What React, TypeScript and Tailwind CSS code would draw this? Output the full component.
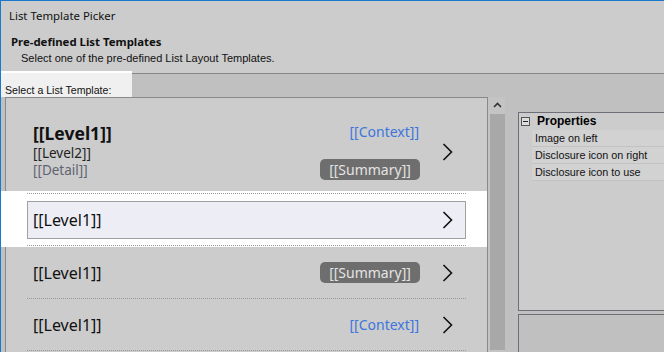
import React from 'react';

const Chevron = () => (
  <svg width="11" height="18" viewBox="0 0 11 18" className="shrink-0">
    <polyline points="1.5,1 9.5,9 1.5,17" fill="none" stroke="#111" strokeWidth="1.6" />
  </svg>
);

const Summary = () => (
  <span className="inline-flex h-[21px] w-[100px] items-center justify-center rounded-[5px] bg-[#6e6e6e] text-[14px] text-[#e4e4e4]">
    [[Summary]]
  </span>
);

const Context = () => <span className="text-[14px] text-[#3d76dc]">[[Context]]</span>;

const rows = ['Image on left', 'Disclosure icon on right', 'Disclosure icon to use'];

const arial = { fontFamily: '"Liberation Sans", Arial, sans-serif' };

export default function App() {
  return (
    <div
      className="relative h-[352px] w-[664px] overflow-hidden border-l border-t border-[#1979ca] bg-[#c0c0c0] text-[#111]"
      style={{ fontFamily: '"Noto Sans", "Open Sans", sans-serif' }}
    >
      <div className="h-[70px] bg-[#cccccc] pl-[8px] pt-[7px] text-[11.4px] leading-[16px]">
        <div>List Template Picker</div>
        <div className="mt-[10px] pl-[2px] font-bold">Pre-defined List Templates</div>
        <div className="pl-[12px] text-[11px]" style={arial}>
          Select one of the pre-defined List Layout Templates.
        </div>
      </div>

      <div className="flex h-[26px]">
        <div
          className="w-[131px] border-t-2 border-white bg-[#f0f0f0] pl-[4px] pt-[10px] text-[10.6px] leading-[14px]"
          style={arial}
        >
          Select a List Template:
        </div>
        <div className="flex-1">
          <div className="h-[2px] bg-[#cccccc]" />
          <div className="h-px bg-[#888]" />
        </div>
      </div>

      <div className="flex">
        <div className="ml-[4px] h-[256px] w-[483px] border-l border-r border-t border-[#8a8a8a] bg-[#cccccc]">
          {/* item 1 */}
          <div className="mx-[21px] flex h-[93px] items-center pl-[6px] pr-[13px] pt-[12px]">
            <div className="flex flex-1 flex-col">
              <span className="text-[17.5px] font-bold leading-[22px] text-[#111]">[[Level1]]</span>
              <span className="text-[13.5px] leading-[18px] text-[#222]">[[Level2]]</span>
              <span className="text-[13.5px] leading-[17px] text-[#5f6472]">[[Detail]]</span>
            </div>
            <div className="flex h-[58px] flex-col items-end justify-between">
              <span className="pr-[1px] leading-[18px]">
                <Context />
              </span>
              <Summary />
            </div>
            <div className="ml-[22px] pt-[2px]">
              <Chevron />
            </div>
          </div>

          {/* item 2, selected */}
          <div className="-ml-[5px] flex h-[56px] flex-col bg-white pl-[5px]">
            <div className="mx-[21px] mt-[2px] border-t border-dotted border-[#999]" />
            <div className="mx-[21px] mt-[7px] flex h-[38px] items-center border border-[#a0a0a0] bg-[#ededf5] pl-[5px] pr-[12px]">
              <span className="flex-1 text-[16px] text-[#111]">[[Level1]]</span>
              <Chevron />
            </div>
            <div className="mx-[21px] mt-[6px] border-t border-dotted border-[#999]" />
          </div>

          {/* item 3 */}
          <div className="mx-[21px] flex h-[52px] items-center border-b border-dotted border-[#999] pl-[6px] pr-[13px]">
            <span className="flex-1 text-[16px] text-[#111]">[[Level1]]</span>
            <Summary />
            <div className="ml-[22px]">
              <Chevron />
            </div>
          </div>

          {/* item 4 */}
          <div className="mx-[21px] flex h-[52px] items-center border-b border-dotted border-[#999] pl-[6px] pr-[13px]">
            <span className="flex-1 text-[16px] text-[#111]">[[Level1]]</span>
            <Context />
            <div className="ml-[23px]">
              <Chevron />
            </div>
          </div>
        </div>

        <div className="flex w-[17px] flex-col items-end bg-[#c4c4c4]">
          <svg width="15" height="17" viewBox="0 0 15 17">
            <polyline points="4,10 7.5,6.5 11,10" fill="none" stroke="#333" strokeWidth="1.6" />
          </svg>
          <div className="h-[236px] w-[15px] bg-[#a8a8a8]" />
        </div>

        <div className="ml-[13px] flex flex-1 flex-col pt-[15px]">
          <div
            className="h-[199px] border-b border-l border-t border-[#6e6e78] bg-[#cccccc] text-[10.8px] leading-[17px]"
            style={arial}
          >
            <div className="flex h-[17px] items-center">
              <span className="ml-[2px] flex h-[9px] w-[9px] items-center justify-center border border-[#555] bg-[#ddd]">
                <span className="h-px w-[5px] bg-[#222]" />
              </span>
              <span className="ml-[7px] text-[12px] font-bold text-black">Properties</span>
            </div>
            {rows.map((r) => (
              <div key={r} className="ml-[13px] h-[17px] border-b border-[#c2c2c2] bg-[#d2d2d2] pl-[3px] text-[#111]">
                {r}
              </div>
            ))}
          </div>
          <div className="mt-[3px] flex-1 border-l border-t border-[#6e6e78] bg-[#c0c0c0]" />
        </div>
      </div>
    </div>
  );
}
